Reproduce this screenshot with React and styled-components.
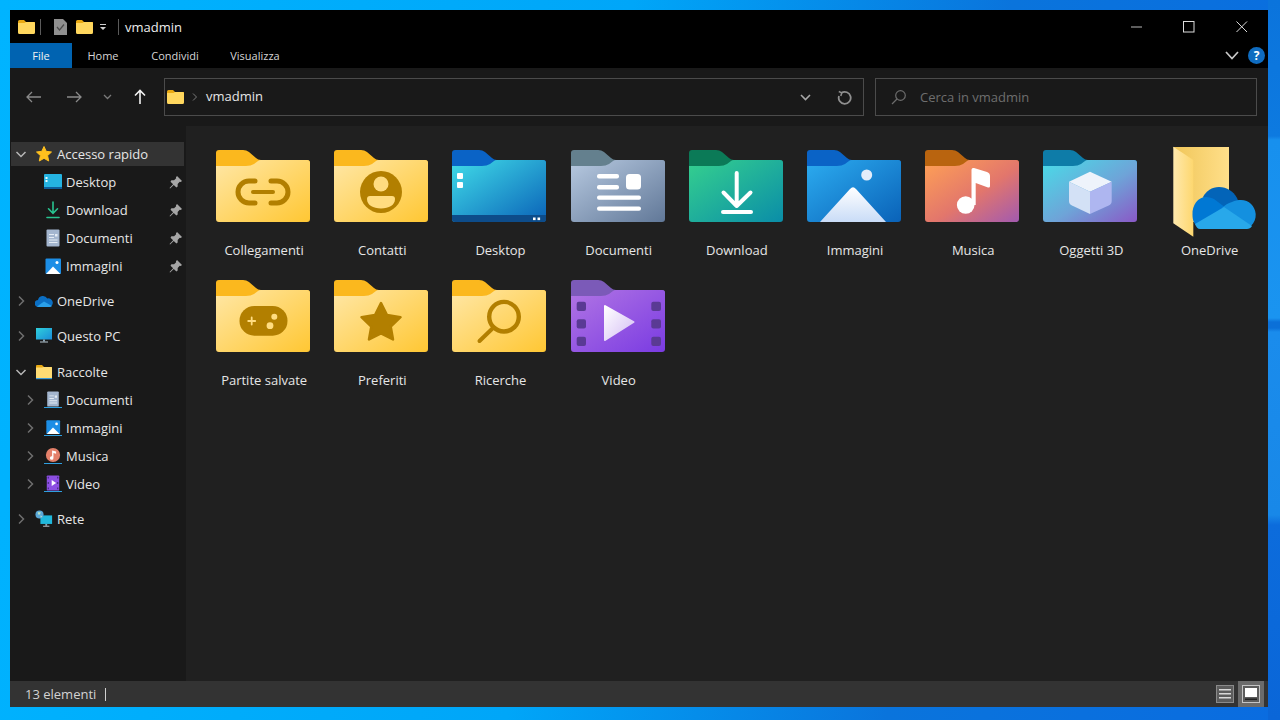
import React from "react";
import styled, { createGlobalStyle } from "styled-components";

const GlobalStyle = createGlobalStyle`
  html, body {
    margin: 0;
    padding: 0;
    background: #0a78e0;
  }
  * {
    box-sizing: border-box;
  }
`;

const YELLOW = { a: "#ffe7a6", b: "#ffc733", tab: "#fbb81e" };

const quickAccess = [
  { name: "Desktop", icon: "desktop" },
  { name: "Download", icon: "download" },
  { name: "Documenti", icon: "docs" },
  { name: "Immagini", icon: "pictures" },
];

const libraries = [
  { name: "Documenti", icon: "docs" },
  { name: "Immagini", icon: "pictures" },
  { name: "Musica", icon: "music" },
  { name: "Video", icon: "video" },
];

const folders = [
  { name: "Collegamenti", kind: "link" },
  { name: "Contatti", kind: "contact" },
  { name: "Desktop", kind: "desktop" },
  { name: "Documenti", kind: "docs" },
  { name: "Download", kind: "download" },
  { name: "Immagini", kind: "pictures" },
  { name: "Musica", kind: "music" },
  { name: "Oggetti 3D", kind: "cube" },
  { name: "OneDrive", kind: "onedrive" },
  { name: "Partite salvate", kind: "games" },
  { name: "Preferiti", kind: "star" },
  { name: "Ricerche", kind: "search" },
  { name: "Video", kind: "video" },
];

const folderColors = {
  link: YELLOW,
  contact: YELLOW,
  games: YELLOW,
  star: YELLOW,
  search: YELLOW,
  desktop: { a: "#40dce8", b: "#0a62b8", tab: "#0a63c6" },
  docs: { a: "#b7c9e0", b: "#617898", tab: "#64808e" },
  download: { a: "#35d08e", b: "#0a8da8", tab: "#0b7a57" },
  pictures: { a: "#2cacf0", b: "#0a62b8", tab: "#0a63c6" },
  music: { a: "#ffa155", m: "#e2766c", b: "#a25ab0", tab: "#b9640f" },
  cube: { a: "#48dce8", m: "#6ea4d8", b: "#8a58c6", tab: "#0e7ca8" },
  video: { a: "#b175e4", b: "#7a3be2", tab: "#7b5ab8" },
};

function FolderArt({ kind }) {
  const dark = "#b27f00";
  const light = "#ffdc80";
  switch (kind) {
    case "link":
      return (
        <g fill="none" stroke={dark} strokeLinecap="round">
          <path strokeWidth="5" d="M39 31H33a11 11 0 0 0 0 22H39M55 31H61a11 11 0 0 1 0 22H55" />
          <path strokeWidth="4" d="M37 42H57" />
        </g>
      );
    case "contact":
      return (
        <g>
          <circle cx="47" cy="42" r="21" fill={dark} />
          <circle cx="47" cy="34" r="7.5" fill={light} />
          <path fill={light} d="M36 46H58a3 3 0 0 1 3 3c0 6-6 9.500-14 9.500s-14-3.500-14-9.500a3 3 0 0 1 3-3Z" />
        </g>
      );
    case "desktop":
      return (
        <g>
          <path fill="#0d4c8a" d="M0 65H94V69a3 3 0 0 1-3 3H3a3 3 0 0 1-3-3Z" />
          <rect x="5" y="23" width="6" height="6" rx="1" fill="#fff" />
          <rect x="5" y="32" width="6" height="6" rx="1" fill="#fff" />
          <rect x="81" y="67.5" width="2.6" height="2.6" fill="#fff" />
          <rect x="85.5" y="67.5" width="2.6" height="2.6" fill="#fff" />
        </g>
      );
    case "docs":
      return (
        <g fill="#fff">
          <rect x="26" y="24" width="22" height="4.5" rx="2" />
          <rect x="26" y="35" width="22" height="4.5" rx="2" />
          <rect x="26" y="45.5" width="44" height="4.2" rx="2" />
          <rect x="26" y="56.5" width="44" height="4.2" rx="2" />
          <rect x="55" y="24" width="15" height="15.5" rx="3.5" />
        </g>
      );
    case "download":
      return (
        <g fill="none" stroke="#fff" strokeWidth="4" strokeLinecap="round" strokeLinejoin="round">
          <path d="M47.7 23V56M34.5 42.5L47.7 56L61.5 42.5" />
          <path d="M34 62H62" />
        </g>
      );
    case "pictures":
      return (
        <g>
          <circle cx="59.7" cy="25" r="5.5" fill="#e3edfa" />
          <path fill="url(#mountain)" d="M13 72L43 39Q46 35.500 49 39L79 72Z" />
        </g>
      );
    case "music":
      return (
        <g fill="#fff">
          <circle cx="40.7" cy="55" r="8.8" />
          <path d="M46.500 55V20a2 2 0 0 1 2.500-2L62 22q3 1 3 4V36q0 2-2 1.400L50.700 33V55Z" />
        </g>
      );
    case "cube":
      return (
        <g strokeLinejoin="round" stroke="none">
          <path fill="#eef3fb" d="M47 21.700L68.700 31.700L47 41.700L26 31.700Z" />
          <path fill="#d3e1f6" d="M26 31.700L47 41.700V64L29 55.500Q26 54 26 51Z" />
          <path fill="#aeb6f0" d="M68.700 31.700L47 41.700V64L65.700 55.500Q68.700 54 68.700 51Z" />
        </g>
      );
    case "games":
      return (
        <g>
          <rect x="23.500" y="26" width="48" height="29.700" rx="14.800" fill={dark} />
          <path stroke={light} strokeWidth="1.800" strokeLinecap="round" d="M35.700 37.500V44.500M32.200 41H39.200" />
          <circle cx="58.300" cy="36.700" r="3" fill={light} />
          <circle cx="54" cy="45.700" r="3.400" fill={light} />
        </g>
      );
    case "star":
      return (
        <path
          fill={dark}
          stroke={dark}
          strokeWidth="2.500"
          strokeLinejoin="round"
          d="M47 23L53 35L66.500 37.200L56.700 46.500L59 59.500L47 53.500L35 59.500L37.300 46.500L27.500 37.200L41 35Z"
        />
      );
    case "search":
      return (
        <g fill="none" stroke={dark} strokeLinecap="round">
          <circle cx="52" cy="36.700" r="14.800" strokeWidth="4.400" />
          <path strokeWidth="4" d="M41 48L27.500 61" />
        </g>
      );
    case "video":
      return (
        <g>
          <g fill="#5a3a94">
            {[21.7, 39.3, 56.7].map((y) => (
              <React.Fragment key={y}>
                <rect x="5.700" y={y} width="9.300" height="9.300" rx="2" />
                <rect x="80.300" y={y} width="9.700" height="9.300" rx="2" />
              </React.Fragment>
            ))}
          </g>
          <path
            fill="url(#play)"
            stroke="url(#play)"
            strokeWidth="2"
            strokeLinejoin="round"
            d="M34 26L62.500 42L34 60Z"
          />
        </g>
      );
    default:
      return null;
  }
}

function FolderIcon({ kind }) {
  if (kind === "onedrive") {
    return (
      <LargeIcon viewBox="0 0 94 72">
        <defs>
          <linearGradient id="od-back" x1="0" y1="0" x2="1" y2="0">
            <stop offset="0" stopColor="#f0c659" />
            <stop offset="1" stopColor="#ffdf8a" />
          </linearGradient>
          <linearGradient id="od-front" x1="0" y1="0" x2="1" y2="0">
            <stop offset="0" stopColor="#ffe9ad" />
            <stop offset="1" stopColor="#fdd76f" />
          </linearGradient>
        </defs>
        <path fill="url(#od-back)" d="M11.300 -3H67V72H31Z" />
        <path fill="url(#od-front)" d="M11.300 -3.300L31.300 10V86.700L11.300 73.300Z" />
        <path fill="#0364b8" d="M41 47C44 41 50 37 57 37C65 37 71 41 75 48L80 60L50 62Z" />
        <path fill="#0078d4" d="M30.500 65C30 55 36 47 44 47C47 47 50 48 52 49L64 58L36 77C32 74 30.500 70 30.500 65Z" />
        <path fill="#1490df" d="M70 52C73 50.500 76 50 79 50C87 50 93 56 93.700 64C94 69 92 73 89 76L60 58C63 55 66 53 70 52Z" />
        <path fill="#28a8ea" d="M38 79H85C87 79 89 78 90 76L62 57L33 74C34 77 36 79 38 79Z" />
      </LargeIcon>
    );
  }
  const c = folderColors[kind];
  return (
    <LargeIcon viewBox="0 0 94 72">
      <defs>
        <linearGradient id={`body-${kind}`} x1="0" y1="0" x2="1" y2="1">
          <stop offset="0" stopColor={c.a} />
          {c.m && <stop offset="0.55" stopColor={c.m} />}
          <stop offset="1" stopColor={c.b} />
        </linearGradient>
        <linearGradient id="mountain" x1="0" y1="0" x2="0" y2="1">
          <stop offset="0" stopColor="#fff" />
          <stop offset="1" stopColor="#c9dcf7" />
        </linearGradient>
        <linearGradient id="play" x1="0" y1="0" x2="1" y2="1">
          <stop offset="0" stopColor="#fff" />
          <stop offset="1" stopColor="#d4bdf4" />
        </linearGradient>
      </defs>
      <path fill={c.tab} d="M0 3a3 3 0 0 1 3-3H27q3.500 0 6 2l7 6q2 2 5 2H91a3 3 0 0 1 3 3V24H0Z" />
      <path
        fill={`url(#body-${kind})`}
        d="M0 16H30q5 0 8-2l4-3q1-1 3-1H91a3 3 0 0 1 3 3V69a3 3 0 0 1-3 3H3a3 3 0 0 1-3-3Z"
      />
      <FolderArt kind={kind} />
    </LargeIcon>
  );
}

function SmallFolder() {
  return (
    <svg width="17" height="14" viewBox="0 0 17 14">
      <path fill="#e9a912" d="M0 1.500A1.500 1.500 0 0 1 1.500 0H6l2 2H17V6H0Z" />
      <path fill="#ffd75e" d="M0 3H6.500L8 2H15.500A1.500 1.500 0 0 1 17 3.500V12.500A1.500 1.500 0 0 1 15.500 14H1.500A1.500 1.500 0 0 1 0 12.500Z" />
    </svg>
  );
}

function NavIcon({ kind }) {
  switch (kind) {
    case "star":
      return (
        <svg width="18" height="18" viewBox="0 0 18 18">
          <path
            fill="#ffc01e"
            stroke="#ffc01e"
            strokeWidth="1"
            strokeLinejoin="round"
            d="M9 1.500L11.200 6.300L16.500 7L12.600 10.600L13.700 16L9 13.300L4.300 16L5.400 10.600L1.500 7L6.800 6.300Z"
          />
        </svg>
      );
    case "desktop":
      return (
        <svg width="18" height="16" viewBox="0 0 18 16">
          <rect width="18" height="14" rx="1" fill="#25b4e2" />
          <path fill="#0d5f9c" d="M0 13H18V15H0Z" />
          <rect x="1.500" y="3" width="2" height="2" fill="#e6fbff" />
          <rect x="1.500" y="6" width="2" height="2" fill="#e6fbff" />
        </svg>
      );
    case "download":
      return (
        <svg width="18" height="18" viewBox="0 0 18 18" fill="none" stroke="#28c490" strokeWidth="1.600" strokeLinecap="round">
          <path d="M9 1V12M4.500 7.800L9 12.300L13.500 7.800" />
          <path d="M3 16.500H15" />
        </svg>
      );
    case "docs":
      return (
        <svg width="18" height="18" viewBox="0 0 18 18">
          <rect x="2.500" y="0.500" width="13" height="17" rx="1" fill="#a4b6cf" />
          <path fill="#e4ebf4" d="M5 5H10V6H5ZM11 5H13.500V7.500H11ZM5 8H10V9H5ZM5 10.500H13.500V11.500H5ZM5 13H13.500V14H5Z" />
        </svg>
      );
    case "pictures":
      return (
        <svg width="18" height="18" viewBox="0 0 18 18">
          <rect x="1.500" y="1.500" width="15.500" height="15.500" rx="1" fill="#1c8ee6" />
          <circle cx="13" cy="5.500" r="1.500" fill="#fff" />
          <path fill="#fff" d="M2 17L9 9.500L16.500 17Z" />
        </svg>
      );
    case "music":
      return (
        <svg width="18" height="18" viewBox="0 0 18 18">
          <circle cx="9" cy="9" r="8" fill="#e4806a" />
          <path fill="#fff" d="M8 4L12.500 5V7.500L9.500 6.800V12.300A2 2 0 1 1 8 10.500Z" />
        </svg>
      );
    case "video":
      return (
        <svg width="18" height="18" viewBox="0 0 18 18">
          <rect x="2" y="0.500" width="14" height="17" rx="1" fill="#8c4ee2" />
          <path fill="#fff" d="M7.500 5.500L12.500 9L7.500 12.500Z" />
          <path fill="#4d2f8c" d="M3 2H4.500V4H3ZM3 8H4.500V10H3ZM3 14H4.500V16H3ZM13.500 2H15V4H13.500ZM13.500 8H15V10H13.500ZM13.500 14H15V16H13.500Z" />
        </svg>
      );
    case "cloud":
      return (
        <svg width="18" height="12" viewBox="0 0 18 12">
          <path fill="#0b6fc4" d="M3.500 12A3.500 3.500 0 0 1 3 5A5 5 0 0 1 12.300 3.500A4.200 4.200 0 0 1 14.500 12Z" />
          <path fill="#2aa0ea" d="M2 11.500L9 6.500L17 11A4 4 0 0 1 14.500 12H3.500Z" />
        </svg>
      );
    case "monitor":
      return (
        <svg width="18" height="18" viewBox="0 0 18 18">
          <defs>
            <linearGradient id="screen" x1="0" y1="0" x2="1" y2="1">
              <stop offset="0" stopColor="#2fd0dc" />
              <stop offset="1" stopColor="#1a8cd8" />
            </linearGradient>
          </defs>
          <rect x="1" y="1" width="16" height="11.500" fill="url(#screen)" />
          <rect x="8" y="12.500" width="2" height="2" fill="#8aa4b4" />
          <rect x="5" y="14.500" width="8" height="1" fill="#b6c6d0" />
        </svg>
      );
    case "collection":
      return (
        <svg width="18" height="16" viewBox="0 0 18 16">
          <path fill="#e9a912" d="M1 2A1 1 0 0 1 2 1H7L9 3H17V6H1Z" />
          <path fill="#ffdc74" d="M1 3.500H7L8.500 3H16A1 1 0 0 1 17 4V14H1Z" />
          <rect x="1" y="14" width="16" height="1.200" fill="#3b9ad8" />
        </svg>
      );
    case "network":
      return (
        <svg width="20" height="20" viewBox="0 0 20 20">
          <rect x="6" y="6" width="13" height="9.500" fill="#20b8dc" />
          <rect x="11.500" y="15.500" width="2" height="2" fill="#8aa4b4" />
          <rect x="9" y="17.500" width="7" height="1" fill="#c6d2da" />
          <circle cx="5" cy="5" r="4.500" fill="#5aa8d8" />
          <path fill="#b8e2c4" d="M3 2.500H6.500L5.500 5H3.500ZM6 6L8 7L6.500 8.500Z" />
        </svg>
      );
    default:
      return null;
  }
}

function Chevron({ open }) {
  return (
    <ChevronBox>
      <svg width="12" height="12" viewBox="0 0 12 12" fill="none" stroke={open ? "#b8b8b8" : "#6e6e6e"} strokeWidth="1.500">
        {open ? <path d="M1.500 4L6 8.500L10.500 4" /> : <path d="M4 1.500L8.500 6L4 10.500" />}
      </svg>
    </ChevronBox>
  );
}

function TreeRow({ name, icon, level, open, expandable, pinned, selected, shelf }) {
  return (
    <Row $level={level} $selected={selected}>
      {expandable ? <Chevron open={open} /> : <ChevronBox />}
      <RowIcon $shelf={shelf}>
        <NavIcon kind={icon} />
      </RowIcon>
      <RowLabel>{name}</RowLabel>
      {pinned && (
        <Pin viewBox="0 0 12 12">
          <path fill="#a6a6a6" d="M7.400 0L12 4.600L10.800 5.600L9.900 5.400L8 7.300L8 9.800L6.800 10.600L4.400 8.200L1 11.500L.5 11L3.800 7.600L1.400 5.200L2.200 4L4.700 4L6.600 2.100L6.400 1.200Z" />
        </Pin>
      )}
    </Row>
  );
}

function App() {
  return (
    <Desktop>
      <GlobalStyle />
      <Window>
        <TitleBar>
          <QuickTools>
            <ToolSlot $left={0}>
              <SmallFolder />
            </ToolSlot>
            <ToolSep $left={5} />
            <ToolSlot $left={13}>
              <svg width="13" height="16" viewBox="0 0 13 16">
                <path fill="#8f8f8f" d="M0 0H9L13 4V16H0Z" />
                <path fill="none" stroke="#4a4a4a" strokeWidth="1.200" d="M3 8L5.500 11L10 5.500" />
              </svg>
            </ToolSlot>
            <ToolSlot $left={9}>
              <SmallFolder />
            </ToolSlot>
            <ToolSlot $left={6}>
              <svg width="8" height="8" viewBox="0 0 8 8">
                <path fill="#cfcfcf" d="M1 1H7V2H1ZM1 4H7L4 7Z" />
              </svg>
            </ToolSlot>
            <ToolSep $left={11} />
          </QuickTools>
          <WindowTitle>vmadmin</WindowTitle>
          <WindowButtons>
            <WindowButton>
              <svg width="12" height="12" viewBox="0 0 12 12">
                <path stroke="#9a9a9a" strokeWidth="1.200" d="M0 6H11" />
              </svg>
            </WindowButton>
            <WindowButton>
              <svg width="12" height="12" viewBox="0 0 12 12">
                <rect x=".5" y=".5" width="10.500" height="10.500" fill="none" stroke="#dcdcdc" />
              </svg>
            </WindowButton>
            <WindowButton>
              <svg width="12" height="12" viewBox="0 0 12 12">
                <path stroke="#dcdcdc" strokeWidth="1" d="M.5 .5L11 11M11 .5L.5 11" />
              </svg>
            </WindowButton>
          </WindowButtons>
        </TitleBar>
        <Ribbon>
          <FileTab>File</FileTab>
          <RibbonTab $width={62}>Home</RibbonTab>
          <RibbonTab $width={82}>Condividi</RibbonTab>
          <RibbonTab $width={78}>Visualizza</RibbonTab>
          <RibbonRight>
            <svg width="14" height="9" viewBox="0 0 14 9" fill="none" stroke="#c8c8c8" strokeWidth="1.700">
              <path d="M1 1L7 7.500L13 1" />
            </svg>
            <HelpBadge>?</HelpBadge>
          </RibbonRight>
        </Ribbon>
        <NavBar>
          <NavButton $width={40}>
            <svg width="16" height="12" viewBox="0 0 16 12" fill="none" stroke="#8a8a8a" strokeWidth="1.300">
              <path d="M15 6H1M6 1L1 6L6 11" />
            </svg>
          </NavButton>
          <NavButton $width={40}>
            <svg width="16" height="12" viewBox="0 0 16 12" fill="none" stroke="#8a8a8a" strokeWidth="1.300">
              <path d="M1 6H15M10 1L15 6L10 11" />
            </svg>
          </NavButton>
          <NavButton $width={26}>
            <svg width="9" height="6" viewBox="0 0 9 6" fill="none" stroke="#7a7a7a" strokeWidth="1.300">
              <path d="M1 1L4.500 4.500L8 1" />
            </svg>
          </NavButton>
          <NavButton $width={40}>
            <svg width="12" height="16" viewBox="0 0 12 16" fill="none" stroke="#f2f2f2" strokeWidth="1.600">
              <path d="M6 15V1.500M1 6.500L6 1.500L11 6.500" />
            </svg>
          </NavButton>
          <AddressBox>
            <AddressFolder>
              <SmallFolder />
            </AddressFolder>
            <svg width="6" height="8" viewBox="0 0 6 8" fill="none" stroke="#7a7a7a" strokeWidth="1">
              <path d="M1 .5L4.500 4L1 7.500" />
            </svg>
            <AddressText>vmadmin</AddressText>
            <AddressChevron>
              <svg width="11" height="7" viewBox="0 0 11 7" fill="none" stroke="#a8a8a8" strokeWidth="1.600">
                <path d="M1 1L5.500 5.500L10 1" />
              </svg>
            </AddressChevron>
            <RefreshButton>
              <svg width="15" height="15" viewBox="0 0 15 15" fill="none" stroke="#8f8f8f" strokeWidth="1.800">
                <path d="M4.500 2.800A6 6 0 1 1 2 6" />
                <path d="M1.800 1.500L4.800 2.800L3.800 6" strokeWidth="1.500" />
              </svg>
            </RefreshButton>
          </AddressBox>
          <SearchBox>
            <svg width="15" height="15" viewBox="0 0 15 15" fill="none" stroke="#6c6c6c" strokeWidth="1.200">
              <circle cx="9.500" cy="5.500" r="4.800" />
              <path d="M6 9L1 14" />
            </svg>
            <SearchText>Cerca in vmadmin</SearchText>
          </SearchBox>
        </NavBar>
        <Content>
          <Sidebar>
            <TreeGroup>
              <TreeRow name="Accesso rapido" icon="star" level={0} expandable open selected />
              {quickAccess.map((item) => (
                <TreeRow key={item.name} name={item.name} icon={item.icon} level={1} pinned />
              ))}
            </TreeGroup>
            <TreeGroup>
              <TreeRow name="OneDrive" icon="cloud" level={0} expandable />
            </TreeGroup>
            <TreeGroup>
              <TreeRow name="Questo PC" icon="monitor" level={0} expandable />
            </TreeGroup>
            <TreeGroup>
              <TreeRow name="Raccolte" icon="collection" level={0} expandable open />
              {libraries.map((item) => (
                <TreeRow key={item.name} name={item.name} icon={item.icon} level={1} expandable shelf />
              ))}
            </TreeGroup>
            <TreeGroup>
              <TreeRow name="Rete" icon="network" level={0} expandable />
            </TreeGroup>
          </Sidebar>
          <FileGrid>
            {folders.map((f) => (
              <FileItem key={f.name}>
                <FolderIcon kind={f.kind} />
                <FileName>{f.name}</FileName>
              </FileItem>
            ))}
          </FileGrid>
        </Content>
        <StatusBar>
          <StatusText>13 elementi</StatusText>
          <StatusSep />
          <ViewButtons>
            <ViewButton>
              <svg width="18" height="18" viewBox="0 0 18 18">
                <rect x=".5" y=".5" width="17" height="17" fill="#5c5c5c" stroke="#8a8a8a" />
                <path fill="#d8d8d8" d="M3 4H15V5.500H3ZM3 8H15V9.500H3ZM3 12H15V13.500H3Z" />
              </svg>
            </ViewButton>
            <ViewButton $active>
              <svg width="18" height="18" viewBox="0 0 18 18">
                <rect x=".5" y=".5" width="17" height="17" fill="#5c5c5c" stroke="#c4c4c4" />
                <rect x="3" y="3" width="12" height="9" fill="#fff" />
                <path fill="#222" d="M3 13.500H15V15H3Z" />
              </svg>
            </ViewButton>
          </ViewButtons>
        </StatusBar>
      </Window>
    </Desktop>
  );
}

const Desktop = styled.div`
  width: 1280px;
  height: 720px;
  padding: 10px 12px 13px 10px;
  overflow: hidden;
  background:
    linear-gradient(
        180deg,
        #0b74dc 0,
        #0d7ae0 136px,
        #1790ee 140px,
        #1a94f0 318px,
        #0b70d8 322px,
        #0b70d8 328px,
        #1a8cec 332px,
        #1888e8 515px,
        #0c6cdc 525px,
        #0a66d8 100%
      )
      right / 12px 100% no-repeat,
    linear-gradient(100deg, #00b4ff 0%, #00a6f8 45%, #0a74dc 72%, #0a6ce0 100%);
`;

const Window = styled.div`
  width: 1258px;
  height: 697px;
  display: flex;
  flex-direction: column;
  background: #191919;
  color: #e6e6e6;
  font-family: "Open Sans", "Liberation Sans", sans-serif;
  font-size: 13px;
`;

const TitleBar = styled.div`
  height: 33px;
  flex: none;
  display: flex;
  align-items: center;
  padding-left: 8px;
  background: #000;
`;

const QuickTools = styled.div`
  display: flex;
  align-items: center;
`;

const ToolSlot = styled.span`
  display: flex;
  margin-left: ${(p) => p.$left}px;
`;

const ToolSep = styled.span`
  width: 1px;
  height: 16px;
  margin-left: ${(p) => p.$left}px;
  background: #5a5a5a;
`;

const WindowTitle = styled.span`
  margin-left: 6px;
  color: #ededed;
`;

const WindowButtons = styled.div`
  margin-left: auto;
  display: flex;
`;

const WindowButton = styled.div`
  width: 52.5px;
  height: 33px;
  display: flex;
  align-items: center;
  justify-content: center;
`;

const Ribbon = styled.div`
  height: 25px;
  flex: none;
  display: flex;
  background: #000;
  font-size: 11px;
`;

const FileTab = styled.div`
  width: 62px;
  display: flex;
  align-items: center;
  justify-content: center;
  background: #0063b1;
  color: #f2f2f2;
`;

const RibbonTab = styled.div`
  width: ${(p) => p.$width}px;
  display: flex;
  align-items: center;
  justify-content: center;
  color: #d6d6d6;
`;

const RibbonRight = styled.div`
  margin-left: auto;
  display: flex;
  align-items: center;
  gap: 9px;
  padding-right: 3px;
`;

const HelpBadge = styled.span`
  width: 17px;
  height: 17px;
  border-radius: 50%;
  background: #0f6cc0;
  color: #fff;
  font-size: 12px;
  font-weight: 700;
  display: flex;
  align-items: center;
  justify-content: center;
`;

const NavBar = styled.div`
  height: 58px;
  flex: none;
  display: flex;
  align-items: center;
  padding: 0 11px 0 4px;
  background: #191919;
`;

const NavButton = styled.div`
  width: ${(p) => p.$width}px;
  display: flex;
  justify-content: center;
  flex: none;
`;

const AddressBox = styled.div`
  width: 700px;
  height: 38px;
  margin-left: 4px;
  display: flex;
  align-items: center;
  flex: none;
  border: 1px solid #4b4b4b;
`;

const AddressFolder = styled.span`
  display: flex;
  margin: 0 8px 0 2px;
`;

const AddressText = styled.span`
  margin: -2px 0 0 8px;
  color: #e6e6e6;
`;

const AddressChevron = styled.span`
  margin-left: auto;
  width: 40px;
  display: flex;
  justify-content: center;
`;

const RefreshButton = styled.span`
  width: 38px;
  height: 100%;
  display: flex;
  align-items: center;
  justify-content: center;
`;

const SearchBox = styled.div`
  flex: 1;
  height: 38px;
  margin-left: 11px;
  display: flex;
  align-items: center;
  gap: 14px;
  padding-left: 15px;
  border: 1px solid #4b4b4b;
`;

const SearchText = styled.span`
  color: #6e6e6e;
`;

const Content = styled.div`
  flex: 1;
  min-height: 0;
  display: flex;
`;

const Sidebar = styled.div`
  width: 176px;
  flex: none;
  padding: 16px 2px 0 1px;
  display: flex;
  flex-direction: column;
  gap: 7.5px;
  background: #191919;
`;

const TreeGroup = styled.div`
  display: flex;
  flex-direction: column;
  &:first-child {
    margin-bottom: -1px;
  }
`;

const Row = styled.div`
  height: 24px;
  margin-bottom: 4px;
  display: flex;
  align-items: center;
  padding-left: ${(p) => (p.$level ? 13 : 4)}px;
  background: ${(p) => (p.$selected ? "#333" : "transparent")};
`;

const ChevronBox = styled.span`
  width: 12px;
  flex: none;
  display: flex;
  justify-content: center;
`;

const RowIcon = styled.span`
  width: 18px;
  height: ${(p) => (p.$shelf ? 17 : 20)}px;
  margin-left: 8px;
  flex: none;
  display: flex;
  align-items: center;
  justify-content: center;
  border-bottom: ${(p) => (p.$shelf ? "1.5px solid #2f9fe0" : "none")};
  & > svg {
    max-height: 100%;
  }
`;

const RowLabel = styled.span`
  margin-left: 4px;
  color: #e6e6e6;
`;

const Pin = styled.svg`
  width: 13px;
  height: 13px;
  margin-left: auto;
  margin-right: 2px;
`;

const FileGrid = styled.div`
  flex: 1;
  display: grid;
  grid-template-columns: repeat(9, 118.2px);
  grid-auto-rows: 130px;
  align-content: start;
  padding: 24px 0 0 18px;
  background: #202020;
`;

const FileItem = styled.div`
  display: flex;
  flex-direction: column;
  align-items: center;
`;

const LargeIcon = styled.svg`
  width: 94px;
  height: 72px;
  flex: none;
  overflow: visible;
`;

const FileName = styled.span`
  margin: 18px 0 0 2px;
  line-height: 20px;
  color: #e6e6e6;
`;

const StatusBar = styled.div`
  height: 26px;
  flex: none;
  display: flex;
  align-items: center;
  padding: 0 4px 0 15px;
  background: #333;
  color: #d2d2d2;
`;

const StatusText = styled.span``;

const StatusSep = styled.span`
  width: 1px;
  height: 13px;
  margin-left: 9px;
  background: #cfcfcf;
`;

const ViewButtons = styled.div`
  margin-left: auto;
  display: flex;
  align-items: center;
`;

const ViewButton = styled.div`
  width: 26px;
  height: 26px;
  display: flex;
  align-items: center;
  justify-content: center;
  background: ${(p) => (p.$active ? "#6b6b6b" : "transparent")};
`;

export default App;
